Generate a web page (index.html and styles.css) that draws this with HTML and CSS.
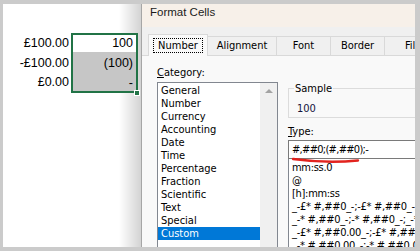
FILE: index.html
```html
<!DOCTYPE html>
<html lang="en">
<head>
    <meta charset="utf-8" />
    <title>Format Cells</title>
    <link rel="stylesheet" href="styles.css">
</head>
<body>
    <div class="frame">
        <div class="sheet">
            <div class="labels">
                <div>£100.00</div>
                <div>-£100.00</div>
                <div>£0.00</div>
            </div>
            <div class="sel">
                <div class="cell active">100</div>
                <div class="cell picked">(100)</div>
                <div class="cell picked last">-</div>
                <div class="handle"></div>
            </div>
        </div>

        <div class="dialog">
            <div class="titlebar">Format Cells</div>
            <div class="tabs">
                <div class="tab on" style="width:60px"><span class="focus">Number</span></div>
                <div class="tab" style="width:69px">Alignment</div>
                <div class="tab" style="width:54px">Font</div>
                <div class="tab" style="width:54px">Border</div>
                <div class="tab" style="width:54px">Fill</div>
            </div>
            <div class="panel">
                <div class="cat-col">
                    <div class="label"><u>C</u>ategory:</div>
                    <div class="listbox">
                        <ul class="items">
                            <li>General</li>
                            <li>Number</li>
                            <li>Currency</li>
                            <li>Accounting</li>
                            <li>Date</li>
                            <li>Time</li>
                            <li>Percentage</li>
                            <li>Fraction</li>
                            <li>Scientific</li>
                            <li>Text</li>
                            <li>Special</li>
                            <li class="on">Custom</li>
                        </ul>
                        <div class="scroll"><div class="arrow"></div></div>
                    </div>
                </div>
                <div class="type-col">
                    <fieldset class="sample">
                        <legend>Sample</legend>
                        <div class="sample-val">100</div>
                    </fieldset>
                    <div class="type-label"><u>T</u>ype:</div>
                    <div class="type-input">#,##0;(#,##0);-
                        <svg class="mark" width="72" height="8" viewBox="0 0 72 8">
                            <path d="M2 3 Q 35 7.5 67 4.5" fill="none" stroke="#e2231e" stroke-width="2.4" stroke-linecap="round"/>
                        </svg>
                    </div>
                    <ul class="type-list">
                        <li>mm:ss.0</li>
                        <li>@</li>
                        <li>[h]:mm:ss</li>
                        <li>_-£* #,##0_-;-£* #,##0_-;_-£* "-"_-;_-@_-</li>
                        <li>_-* #,##0_-;-* #,##0_-;_-* "-"_-;_-@_-</li>
                        <li>_-£* #,##0.00_-;-£* #,##0.00_-;_-£* "-"??_-;_-@_-</li>
                        <li>_-* #,##0.00_-;-* #,##0.00_-;_-* "-"??_-;_-@_-</li>
                    </ul>
                </div>
            </div>
        </div>
    </div>
</body>
</html>
```

FILE: styles.css
```css
body {
    margin: 0;
    background: #cbcbcb;
    font-family: "DejaVu Sans Condensed", "DejaVu Sans", sans-serif;
    font-stretch: condensed;
    font-size: 11px;
    color: #000;
}
ul {
    margin: 0;
    padding: 0;
    list-style: none;
}
.frame {
    display: flex;
    height: 243px;
    margin: 4px 5px 0 3px;
    overflow: hidden;
    background: #fff;
}

/* spreadsheet behind the dialog */
.sheet {
    flex: none;
    display: flex;
    align-items: flex-start;
    width: 138px;
    padding-top: 29px;
    box-sizing: border-box;
    background: linear-gradient(to right, #fff 116px, #d3d3d3 138px);
    font-family: "Liberation Sans", Arial, sans-serif;
    font-stretch: normal;
    font-size: 12.5px;
}
.labels {
    width: 68px;
    padding: 1px 2px 0 0;
    box-sizing: border-box;
    text-align: right;
    line-height: 19.5px;
}
.sel {
    position: relative;
    width: 67px;
    border: 2px solid #217346;
    box-sizing: border-box;
    text-align: right;
}
.cell {
    padding-right: 3px;
    box-sizing: border-box;
}
.cell.active {
    height: 17px;
    line-height: 17px;
    background: #fff;
}
.cell.picked {
    height: 20px;
    padding-top: 2px;
    line-height: 18px;
    background: #c6c6c6;
}
.cell.last {
    height: 19px;
}
.handle {
    position: absolute;
    right: -4px;
    bottom: -5px;
    width: 4px;
    height: 4px;
    border: 1px solid #fff;
    background: #217346;
}

/* dialog */
.dialog {
    flex: none;
    width: 420px;
    border-left: 1px solid #a6a6a6;
    background: #f0f0f0;
}
.titlebar {
    height: 23px;
    padding-left: 8px;
    line-height: 16px;
    background: #f7f0e9;
    font-family: "Liberation Sans", Arial, sans-serif;
    font-stretch: normal;
    font-size: 11.5px;
    color: #1b1b1b;
}
.tabs {
    display: flex;
    align-items: flex-end;
    height: 28px;
    padding-left: 6px;
}
.tab {
    height: 19px;
    box-sizing: border-box;
    border: solid #d9d9d9;
    border-width: 1px 1px 0 0;
    line-height: 18px;
    text-align: center;
    background: #f0f0f0;
}
.tab:first-child {
    border-left-width: 1px;
}
.tab.on {
    position: relative;
    z-index: 1;
    height: 22px;
    margin-bottom: -1px;
    padding-top: 3px;
    line-height: 13px;
    background: #f9f9f9;
}
.focus {
    display: inline-block;
    padding: 0 4px;
    border: 1px dotted #000;
}
.panel {
    display: flex;
    gap: 10px;
    height: 200px;
    padding-left: 15px;
    border-top: 1px solid #d9d9d9;
    background: #f9f9f9;
}
.cat-col {
    flex: none;
    width: 121px;
}
.label {
    margin-top: 10px;
    line-height: 13px;
}
.listbox {
    display: flex;
    height: 180px;
    margin-top: 3px;
    border: 1px solid #828790;
    background: #fff;
}
.items {
    flex: 1;
    padding-top: 1px;
}
.items li {
    padding-left: 3px;
    line-height: 13px;
}
.items li.on {
    background: #0078d7;
    color: #fff;
}
.scroll {
    width: 17px;
    background: #f0f0f0;
}
.arrow {
    width: 0;
    margin: 6px auto 0;
    border-left: 4px solid transparent;
    border-right: 4px solid transparent;
    border-bottom: 4px solid #a3a3a3;
}
.type-col {
    flex: 1;
    min-width: 0;
}
.sample {
    margin: 26px 0 0;
    padding: 7px 0 2px 5px;
    border: 1px solid #dcdcdc;
}
.sample legend {
    padding: 0 1px;
    line-height: 13px;
}
.sample-val {
    padding-left: 3px;
    line-height: 13px;
    color: #14143c;
}
.type-label {
    margin-top: 7px;
    line-height: 13px;
}
.type-input {
    position: relative;
    height: 19px;
    margin-top: 2px;
    padding-left: 3px;
    box-sizing: border-box;
    border: 1px solid #7a7a7a;
    line-height: 17px;
    letter-spacing: -0.7px;
    background: #fff;
}
.mark {
    position: absolute;
    left: 2px;
    top: 15px;
}
.type-list {
    height: 100px;
    padding: 2px 0 0 3px;
    border: 1px solid #828790;
    border-top: none;
    background: #fff;
    line-height: 13px;
    letter-spacing: -0.3px;
    white-space: nowrap;
}
```
